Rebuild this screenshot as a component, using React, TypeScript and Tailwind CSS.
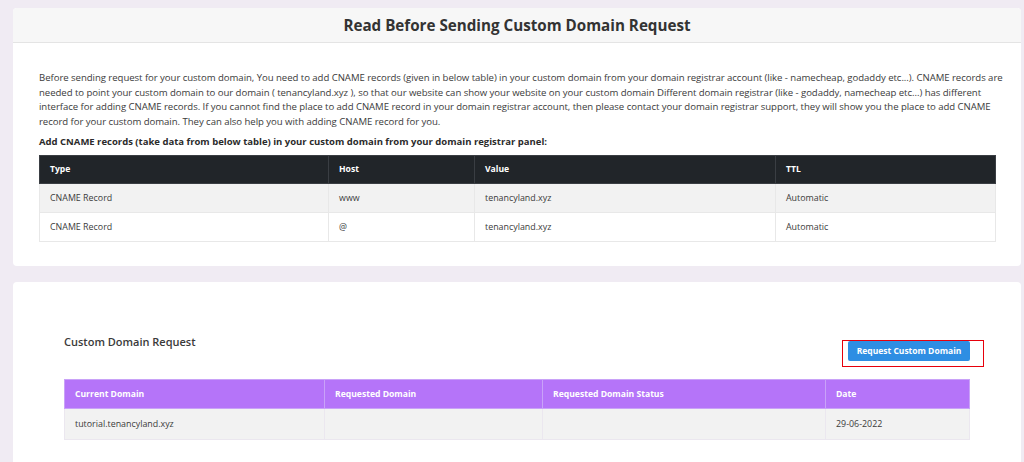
import React from 'react';

const font = { fontFamily: '"Open Sans", "Noto Sans", sans-serif' };

const cnameRows = [
  { type: 'CNAME Record', host: 'www', value: 'tenancyland.xyz', ttl: 'Automatic' },
  { type: 'CNAME Record', host: '@', value: 'tenancyland.xyz', ttl: 'Automatic' },
];

const App: React.FC = () => {
  return (
    <div className="min-h-screen bg-[#f0ebf3] pl-[13px] pr-[3px] pt-[8px] text-[#3b3b3b]" style={font}>
      {/* instructions card */}
      <div className="w-[1008px] bg-white rounded-[4px] overflow-hidden">
        <div className="h-[35px] flex items-center justify-center bg-[#f7f7f7] border-b border-[#e4e4e4]">
          <h1 className="text-[15.2px] font-bold text-[#333]">
            Read Before Sending Custom Domain Request
          </h1>
        </div>
        <div className="px-[26px] pt-[28px] pb-[24px]">
          <p className="text-[9.6px] leading-[14.5px] tracking-[-0.05px] whitespace-nowrap">
            Before sending request for your custom domain, You need to add CNAME records (given in below table) in your custom domain from your domain registrar account (like - namecheap, godaddy etc...). CNAME records are
            <br />
            needed to point your custom domain to our domain ( tenancyland.xyz ), so that our website can show your website on your custom domain Different domain registrar (like - godaddy, namecheap etc...) has different
            <br />
            interface for adding CNAME records. If you cannot find the place to add CNAME record in your domain registrar account, then please contact your domain registrar support, they will show you the place to add CNAME
            <br />
            record for your custom domain. They can also help you with adding CNAME record for you.
          </p>
          <p className="mt-[6px] mb-[6px] text-[9.5px] leading-[14px] font-bold text-[#2b2b2b]">
            Add CNAME records (take data from below table) in your custom domain from your domain registrar panel:
          </p>
          <table className="w-[956px] table-fixed border-collapse text-[8.9px]">
            <colgroup>
              <col className="w-[289px]" />
              <col className="w-[146px]" />
              <col className="w-[301px]" />
              <col className="w-[220px]" />
            </colgroup>
            <thead>
              <tr className="h-[28px] bg-[#212529] text-white font-bold text-[8.6px]">
                <th className="text-left px-[10px] border border-[#3a3e43]">Type</th>
                <th className="text-left px-[10px] border border-[#3a3e43]">Host</th>
                <th className="text-left px-[10px] border border-[#3a3e43]">Value</th>
                <th className="text-left px-[10px] border border-[#3a3e43]">TTL</th>
              </tr>
            </thead>
            <tbody>
              {cnameRows.map((row, i) => (
                <tr key={i} className={`h-[29px] ${i % 2 === 0 ? 'bg-[#f2f2f2]' : 'bg-white'}`}>
                  <td className="px-[10px] border border-[#e8e8e8]">{row.type}</td>
                  <td className="px-[10px] border border-[#e8e8e8]">{row.host}</td>
                  <td className="px-[10px] border border-[#e8e8e8]">{row.value}</td>
                  <td className="px-[10px] border border-[#e8e8e8]">{row.ttl}</td>
                </tr>
              ))}
            </tbody>
          </table>
        </div>
      </div>

      {/* request card */}
      <div className="mt-[16px] w-[1008px] bg-white rounded-[4px] px-[51px] pt-[51px] pb-[50px]">
        <div className="flex items-start justify-between">
          <h2 className="text-[11px] leading-[18px] font-semibold text-[#3a3a3a]">Custom Domain Request</h2>
          <div className="relative mt-[8px] flex">
            <button className="block h-[20px] w-[122px] rounded-[2px] bg-[#2e8ee3] text-white text-[8.5px] font-bold">
              Request Custom Domain
            </button>
            <div className="absolute left-[-6px] right-[-14px] top-[-1px] bottom-[-6px] border border-solid border-red-600 pointer-events-none" />
          </div>
        </div>
        <table className="mt-[18px] w-[905px] table-fixed border-collapse text-[8.9px]">
          <colgroup>
            <col className="w-[260px]" />
            <col className="w-[218px]" />
            <col className="w-[283px]" />
            <col className="w-[144px]" />
          </colgroup>
          <thead>
            <tr className="h-[29px] bg-[#b574f9] text-white font-bold text-[8.6px]">
              <th className="text-left px-[10px] border border-[#c9a2f8]">Current Domain</th>
              <th className="text-left px-[10px] border border-[#c9a2f8]">Requested Domain</th>
              <th className="text-left px-[10px] border border-[#c9a2f8]">Requested Domain Status</th>
              <th className="text-left px-[10px] border border-[#c9a2f8]">Date</th>
            </tr>
          </thead>
          <tbody>
            <tr className="h-[31px] bg-[#f2f2f2]">
              <td className="px-[10px] border border-[#ebe7ef]">tutorial.tenancyland.xyz</td>
              <td className="px-[10px] border border-[#ebe7ef]"></td>
              <td className="px-[10px] border border-[#ebe7ef]"></td>
              <td className="px-[10px] border border-[#ebe7ef]">29-06-2022</td>
            </tr>
          </tbody>
        </table>
      </div>
    </div>
  );
};

export default App;
